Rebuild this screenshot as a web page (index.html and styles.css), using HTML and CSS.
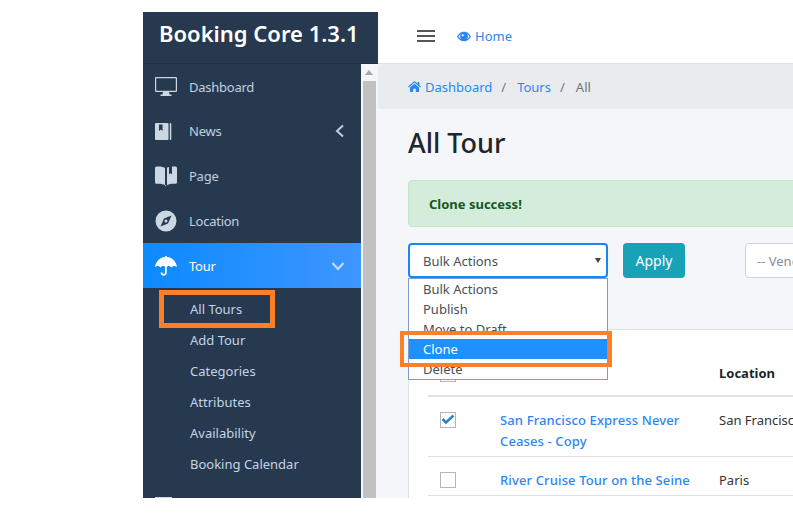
FILE: index.html
```html
<!DOCTYPE html>
<html>
  <head>
    <meta charset="utf-8">
    <title>All Tour</title>
    <link rel="stylesheet" href="styles.css">
  </head>
  <body>
    <div class="shot">
      <aside class="sidebar">
        <div class="brand">Booking Core 1.3.1</div>
        <div class="side-body">
          <nav class="menu">
            <a class="item"><svg class="ico" viewBox="0 0 22 20"><path fill-rule="evenodd" d="M1 0h20a1 1 0 0 1 1 1v13a1 1 0 0 1-1 1h-7l.5 2.500h2v1.500h-11v-1.500h2L8 15H1a1 1 0 0 1-1-1V1a1 1 0 0 1 1-1zm.200 1.200v12.600h19.600V1.200z"/></svg>Dashboard</a>
            <a class="item"><svg class="ico" viewBox="0 0 22 20"><path fill-rule="evenodd" d="M1 2h11.500a1 1 0 0 1 1 1v15a1 1 0 0 1-1 1H1a1 1 0 0 1-1-1V3a1 1 0 0 1 1-1zm3 1.500V10l1.800-1.500L7.600 10V3.500zM14.800 2h.5a1 1 0 0 1 1 1v15a1 1 0 0 1-1 1h-.5z"/></svg>News<svg class="caret" viewBox="0 0 10 14"><path d="M8 1.500 2 7l6 5.500"/></svg></a>
            <a class="item"><svg class="ico" viewBox="0 0 22 20"><path d="M1.500.500C4 .200 7 .500 10 1.800V19C7 17.800 4 17.500 1.500 17.800a1.500 1.500 0 0 1-1.500-1.500V2a1.500 1.500 0 0 1 1.500-1.500zM12 1.800c.7-.3 1.300-.5 2-.7v7.400l1.500-1.500L17 8.500V.5h3.500A1.500 1.500 0 0 1 22 2v14.300a1.500 1.500 0 0 1-1.500 1.500c-2.500-.3-5.500 0-8.500 1.200zM10 19h1.500l-.7 1.500z"/></svg>Page</a>
            <a class="item"><svg class="ico" viewBox="0 0 22 20"><path fill-rule="evenodd" d="M11-.5a10.500 10.500 0 1 1 0 21 10.500 10.500 0 0 1 0-21zM16.500 4.500 9 7.500 5.500 15.500 13 12.500zM11 8.500a1.500 1.500 0 1 1 0 3 1.500 1.500 0 0 1 0-3z"/></svg>Location</a>
            <a class="item active"><svg class="ico" viewBox="0 0 22 20"><path d="M10.200 0h1.600v1.100C16.800 1.500 21 5 22 11c-1.700-1.500-4-1.500-5.500.5-1.200-1.500-3.200-2-4.700-1v5.800c0 4.500-5.800 4.700-6.300.2h1.800c.4 2 2.700 1.800 2.800-.2v-5.800c-1.500-1-3.500-.5-4.700 1C4 9.500 1.700 9.500 0 11 1 5 5.200 1.500 10.200 1.100z"/></svg>Tour<svg class="caret down" viewBox="0 0 14 10"><path d="M1.500 2 7 8l5.500-6"/></svg></a>
            <div class="sub">
              <a class="sub-item"><span class="mark-tours"></span>All Tours</a>
              <a class="sub-item">Add Tour</a>
              <a class="sub-item">Categories</a>
              <a class="sub-item">Attributes</a>
              <a class="sub-item">Availability</a>
              <a class="sub-item">Booking Calendar</a>
            </div>
            <a class="item"><svg class="ico" viewBox="0 0 22 20"><path d="M0 5h17v16H0z"/></svg></a>
          </nav>
          <div class="scrollbar">
            <span class="arrow"></span>
            <span class="thumb"></span>
          </div>
        </div>
      </aside>

      <main class="main">
        <header class="topbar">
          <span class="burger"><i></i><i></i><i></i></span>
          <a class="home"><svg class="eye" viewBox="0 0 16 12"><path fill-rule="evenodd" d="M8 .5c3.300 0 6.200 2 8 5.500-1.800 3.500-4.700 5.500-8 5.500S1.800 9.500 0 6C1.800 2.500 4.700.5 8 .5zM1.600 6c.9 1.400 1.900 2.400 3.100 3.100a5 5 0 0 1 0-6.200C3.500 3.600 2.500 4.600 1.600 6zm12.800 0c-.9-1.400-1.900-2.400-3.100-3.100a5 5 0 0 1 0 6.200c1.200-.7 2.200-1.700 3.100-3.100zM6.500 3.500a1.200 1.200 0 1 0 0 2.400 1.200 1.200 0 0 0 0-2.400z"/></svg>Home</a>
        </header>

        <div class="crumbs">
          <a class="crumb"><svg class="house" viewBox="0 0 14 12"><path d="M7 0 10.500 3V1h1.800v3.500L14 6l-.8 1L7 1.700.8 7 0 6zM2 7.200 7 3l5 4.200V12H8.500V8.500h-3V12H2z"/></svg>Dashboard</a>
          <span class="sep">/</span>
          <a class="crumb">Tours</a>
          <span class="sep">/</span>
          <span class="here">All</span>
        </div>

        <div class="content">
          <h1 class="title">All Tour</h1>
          <div class="alert">Clone success!</div>

          <div class="filters">
            <div class="bulk">
              <div class="select focus">Bulk Actions<span class="tri"></span></div>
              <ul class="options">
                <li>Bulk Actions</li>
                <li>Publish</li>
                <li>Move to Draft</li>
                <li class="picked">Clone</li>
                <li>Delete</li>
                <li class="mark-clone"></li>
              </ul>
            </div>
            <button class="apply">Apply</button>
            <div class="select venue">-- Vendor --</div>
          </div>

          <div class="card">
            <table class="tours">
              <tr class="head">
                <th class="c-check"><span class="box"></span></th>
                <th class="c-name"></th>
                <th class="c-loc">Location</th>
              </tr>
              <tr>
                <td><span class="box checked"><svg viewBox="0 0 14 12"><path d="M1.500 6 5 9.500 12.500 2.500"/></svg></span></td>
                <td><a class="tour">San Francisco Express Never<br>Ceases - Copy</a></td>
                <td>San Francisco</td>
              </tr>
              <tr>
                <td><span class="box"></span></td>
                <td><a class="tour">River Cruise Tour on the Seine</a></td>
                <td>Paris</td>
              </tr>
            </table>
          </div>
        </div>
      </main>
    </div>
  </body>
</html>
```

FILE: styles.css
```css
html, body { margin: 0; background: #fff; overflow: hidden; }
body { font: 400 13px "Noto Sans", sans-serif; color: #495057; }
a { text-decoration: none; }

.shot { display: flex; margin: 12px 0 0 143px; width: 650px; height: 486px; overflow: hidden; }

/* sidebar */
.sidebar { width: 235px; flex: none; background: #27394f; display: flex; flex-direction: column; }
.brand { height: 51px; border-bottom: 1px solid #1f2f43; padding-left: 16px; font-size: 22px; font-weight: 600; line-height: 42px; color: #fff; white-space: nowrap; overflow: hidden; }
.side-body { display: flex; flex: 1; min-height: 0; }
.menu { width: 218px; flex: none; overflow: hidden; }
.item { box-sizing: border-box; display: flex; align-items: center; height: 44.8px; padding-left: 12px; color: #c2cfe0; position: relative; letter-spacing: -.25px; }
.item:first-child { padding-top: 2px; }
.ico { width: 22px; height: 20px; margin-right: 12px; fill: #ccd7e4; overflow: visible; }
.caret { position: absolute; right: 16px; width: 10px; height: 14px; fill: none; stroke: #c2cfe0; stroke-width: 2; }
.caret.down { right: 16px; width: 14px; height: 10px; }
.active { background: linear-gradient(to right, #0c8aff, #3f96ff); color: #fff; }
.active .ico { fill: #fff; }
.active .caret { stroke: #c9dcf5; }
.sub { padding: 6px 0 0 47px; }
.sub-item { display: block; height: 31px; line-height: 31px; color: #c2d4e6; position: relative; }
.mark-tours { position: absolute; left: -31px; top: -4px; width: 106px; height: 28px; border: 5px solid #ff7f27; }
.scrollbar { width: 13px; padding: 0 2px; background: #f4f6f9; display: flex; flex-direction: column; }
.arrow { height: 17px; flex: none; position: relative; }
.arrow::after { content: ""; position: absolute; left: 2px; top: 6px; border: 4px solid transparent; border-top: 0; border-bottom: 5px solid #a8a8a8; }
.thumb { flex: 1; background: #c1c1c1; }

/* main */
.main { flex: 1; min-width: 0; background: #f4f6f9; overflow: hidden; }
.topbar { height: 48px; padding: 0 0 3px 39px; background: #fff; border-bottom: 1px solid #dee2e6; display: flex; align-items: center; }
.burger { display: flex; flex-direction: column; gap: 3px; width: 18px; margin-right: 22px; }
.burger i { display: block; height: 2px; background: #555; }
.home { color: #2a86f5; display: flex; align-items: center; }
.eye { width: 14px; height: 11px; margin-right: 4px; fill: #2a86f5; }
.crumbs { height: 45px; background: #e9ecef; border-radius: 4px 0 0 4px; display: flex; align-items: center; padding-left: 30px; }
.crumb { color: #2a86f5; display: flex; align-items: center; }
.house { width: 13px; height: 11px; margin-right: 4px; fill: #2a86f5; }
.sep { color: #6c757d; padding: 0 11px 0 9px; }
.here { color: #6c757d; }

.content { width: 600px; padding: 15px 0 0 30px; }
.title { margin: 0 0 18px; font-size: 27px; font-weight: 500; line-height: 38px; color: #212529; }
.alert { height: 45px; line-height: 47px; padding-left: 20px; background: #d4edda; border: 1px solid #c3e6cb; border-radius: 4px; font-weight: 700; color: #155724; }

.filters { display: flex; align-items: flex-start; margin-top: 16px; }
.bulk { position: relative; width: 200px; margin-right: 15px; }
.select { box-sizing: border-box; height: 35px; line-height: 35px; padding-left: 14px; background: #fff; border: 1px solid #ced4da; border-radius: 4px; position: relative; }
.select.focus { border: 2px solid #1a86f5; line-height: 33px; padding-left: 13px; }
.tri { position: absolute; right: 5px; top: 13px; border: 3px solid transparent; border-bottom: 0; border-top: 5px solid #444; }
.options { position: absolute; left: 0; top: 35px; z-index: 2; box-sizing: border-box; width: 200px; height: 102px; margin: 0; padding: 0; list-style: none; background: #fff; border: 1px solid #7b9bd1; }
.options li { height: 20px; line-height: 20px; padding-left: 14px; }
.options .picked { background: #1e90ff; color: #fff; }
.options .mark-clone { position: absolute; left: -9px; top: 52px; width: 204px; height: 28px; padding: 0; border: 4px solid #ff7f27; }
.apply { width: 62px; height: 35px; padding: 0; margin: 0; background: #17a2b8; border: 0; border-radius: 4px; color: #fff; font: inherit; font-size: 14px; }
.venue { width: 200px; margin-left: 60px; color: #868e96; padding-left: 11px; }

.card { margin-top: 51px; background: #fff; border-top: 1px solid #dee2e6; border-left: 1px solid #dee2e6; padding-left: 19px; height: 170px; }
.tours { border-collapse: collapse; table-layout: fixed; width: 560px; color: #333; }
.tours td, .tours th { padding: 0; text-align: left; vertical-align: top; }
.c-check { width: 72px; }
.c-name { width: 219px; }
.head { height: 66px; border-bottom: 2px solid #dee2e6; }
.head th { vertical-align: bottom; padding-bottom: 13px; color: #212529; font-weight: 700; }
.tours tr + tr { border-bottom: 1px solid #dee2e6; }
.tours td { padding-top: 13px; padding-bottom: 4px; line-height: 21px; }
.box { display: block; box-sizing: border-box; width: 16px; height: 16px; margin: 2px 0 0 12px; background: #fff; border: 1px solid #b5b5b5; }
.box svg { display: block; width: 14px; height: 12px; fill: none; stroke: #2a86c5; stroke-width: 2.500; }
.tour { color: #2a86f5; font-weight: 500; letter-spacing: .13px; }
```
